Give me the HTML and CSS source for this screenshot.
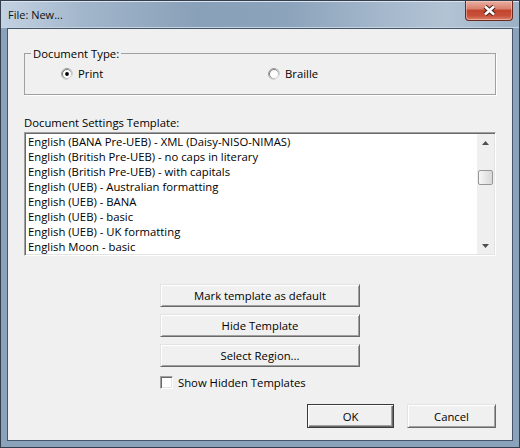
FILE: index.html
```html
<!DOCTYPE html>
<html>
<head>
<meta charset="utf-8">
<link rel="stylesheet" href="styles.css">
</head>
<body>
<div class="window">
  <div class="titlebar">
    <span class="title">File: New...</span>
    <div class="close">
      <svg width="13" height="11" viewBox="0 0 13 11">
        <path d="M2 1.5 L11 9.5 M11 1.5 L2 9.5" stroke="#4a1d16" stroke-width="4.6" fill="none"/>
        <path d="M2 1.5 L11 9.5 M11 1.5 L2 9.5" stroke="#ffffff" stroke-width="2.6" fill="none"/>
      </svg>
    </div>
  </div>
  <div class="frame">
    <div class="client">
      <fieldset class="group">
        <legend>Document Type:</legend>
        <div class="radios">
          <label class="radio print">
            <svg class="rb" width="12" height="12" viewBox="0 0 12 12">
              <defs>
                <linearGradient id="ro" x1="0" y1="0" x2="1" y2="1">
                  <stop offset="0" stop-color="#8a8a8a"/>
                  <stop offset="0.5" stop-color="#a8a8a8"/>
                  <stop offset="1" stop-color="#ffffff"/>
                </linearGradient>
                <linearGradient id="ri" x1="0" y1="0" x2="1" y2="1">
                  <stop offset="0" stop-color="#5a5a5a"/>
                  <stop offset="0.5" stop-color="#9a9a9a"/>
                  <stop offset="1" stop-color="#e3e3e3"/>
                </linearGradient>
              </defs>
              <circle cx="6" cy="6" r="5.5" fill="#fff" stroke="url(#ro)"/>
              <circle cx="6" cy="6" r="4.5" fill="#fff" stroke="url(#ri)"/>
              <circle cx="6" cy="6" r="1.9" fill="#000"/>
            </svg>
            <span>Print</span>
          </label>
          <label class="radio">
            <svg class="rb" width="12" height="12" viewBox="0 0 12 12">
              <circle cx="6" cy="6" r="5.5" fill="#fff" stroke="url(#ro)"/>
              <circle cx="6" cy="6" r="4.5" fill="#fff" stroke="url(#ri)"/>
            </svg>
            <span>Braille</span>
          </label>
        </div>
      </fieldset>

      <div class="list-label">Document Settings Template:</div>
      <div class="listbox">
        <ul class="items">
          <li>English (BANA Pre-UEB) - XML (Daisy-NISO-NIMAS)</li>
          <li>English (British Pre-UEB) - no caps in literary</li>
          <li>English (British Pre-UEB) - with capitals</li>
          <li>English (UEB) - Australian formatting</li>
          <li>English (UEB) - BANA</li>
          <li>English (UEB) - basic</li>
          <li>English (UEB) - UK formatting</li>
          <li>English Moon - basic</li>
        </ul>
        <div class="scrollbar">
          <div class="sb-btn">
            <svg width="7" height="4" viewBox="0 0 7 4"><polygon points="0,4 3.5,0 7,4" fill="#4f4f4f"/></svg>
          </div>
          <div class="sb-track"><div class="thumb"></div></div>
          <div class="sb-btn">
            <svg width="7" height="4" viewBox="0 0 7 4"><polygon points="0,0 3.5,4 7,0" fill="#4f4f4f"/></svg>
          </div>
        </div>
      </div>

      <div class="actions">
        <button class="btn wide">Mark template as default</button>
        <button class="btn wide">Hide Template</button>
        <button class="btn wide">Select Region...</button>
        <label class="check"><span class="cb"></span><span>Show Hidden Templates</span></label>
      </div>

      <div class="footer">
        <button class="btn ok">OK</button>
        <button class="btn cancel">Cancel</button>
      </div>
    </div>
  </div>
</div>
</body>
</html>
```
FILE: styles.css
```css
* { box-sizing: border-box; }
html, body { margin: 0; padding: 0; }
body {
  font-family: "Open Sans", "Liberation Sans", Arial, sans-serif;
  font-size: 11.3px;
  color: #000;
  background: #ffffff;
}
.window {
  width: 520px;
  height: 448px;
  border: 1px solid #333f4d;
  background: #8ba2bb;
  display: flex;
  flex-direction: column;
}
.titlebar {
  height: 27px;
  flex: none;
  display: flex;
  justify-content: space-between;
  align-items: flex-start;
  border-top: 1px solid #dbe4ee;
  border-bottom: 1px solid #c6d3e0;
  padding: 0 6px 0 7px;
  background: linear-gradient(to right, #c3d2e2 0%, #a2b6cb 16%, #88a0b8 38%, #8ba3bb 55%, #a5b8cc 74%, #b2c3d4 86%, #9db1c6 100%);
}
.title {
  font-size: 11px;
  line-height: 14px;
  margin-top: 6px;
  color: #111;
}
.close {
  width: 48px;
  height: 20px;
  margin-top: -1px;
  border: 1px solid #6b2a20;
  border-top: none;
  border-radius: 0 0 4px 4px;
  background: linear-gradient(#eab0a2 0%, #d9826f 40%, #c2452e 50%, #c8503a 78%, #dd8469 100%);
  display: flex;
  align-items: center;
  justify-content: center;
  box-shadow: inset 0 0 0 1px rgba(255, 220, 210, 0.45);
}
.frame {
  flex: 1;
  display: flex;
  padding: 0 6px 6px;
}
.client {
  flex: 1;
  border: 1px solid #45566a;
  background: #f0f0f0;
  padding: 18px 16px 0;
  display: flex;
  flex-direction: column;
}
.group {
  margin: 0;
  padding: 0 0 14px 0;
  border: 1px solid #a0a0a0;
  box-shadow: 1px 1px 0 #ffffff;
  min-inline-size: 0;
}
.group legend {
  margin-left: 6px;
  padding: 0 2px;
  line-height: 13px;
}
.radios {
  display: flex;
  margin-top: 7px;
  padding-left: 36px;
}
.radio {
  display: flex;
  align-items: center;
  gap: 5px;
  height: 13px;
  line-height: 13px;
}
.radio.print { width: 207px; }
.rb { flex: none; }

.list-label {
  margin-top: 21px;
  line-height: 13px;
}
.listbox {
  margin-top: 3px;
  height: 124px;
  display: flex;
  background: #ffffff;
  border: 1px solid;
  border-color: #a0a0a0 #ffffff #ffffff #a0a0a0;
  box-shadow: inset 1px 1px 0 #696969, inset -1px -1px 0 #e3e3e3;
  padding: 1px;
}
.items {
  flex: 1;
  list-style: none;
  margin: 0;
  padding: 0 0 0 2px;
  overflow: hidden;
}
.items li {
  height: 15px;
  line-height: 15px;
  white-space: nowrap;
}
.scrollbar {
  width: 17px;
  flex: none;
  display: flex;
  flex-direction: column;
  background: #efefef;
}
.sb-btn {
  height: 17px;
  display: flex;
  align-items: center;
  justify-content: center;
}
.sb-track {
  flex: 1;
  padding-top: 19px;
  display: flex;
  justify-content: center;
}
.thumb {
  width: 15px;
  height: 15px;
  border: 1px solid #979797;
  border-radius: 2px;
  background: linear-gradient(to right, #f6f6f6, #d8d8d8);
}

.btn {
  font: inherit;
  color: #000;
  background: #f0f0f0;
  border: 1px solid;
  border-color: #e3e3e3 #696969 #696969 #e3e3e3;
  box-shadow: inset 1px 1px 0 #ffffff, inset -1px -1px 0 #a0a0a0;
  padding: 0;
  margin: 0;
  text-align: center;
}
.actions {
  margin-top: 28px;
  margin-left: 136px;
  width: 200px;
  display: flex;
  flex-direction: column;
  gap: 7px;
}
.btn.wide { height: 23px; }
.check {
  margin-top: 2px;
  display: flex;
  align-items: center;
  gap: 5px;
  height: 13px;
  line-height: 13px;
}
.cb {
  width: 13px;
  height: 13px;
  background: #ffffff;
  border: 1px solid;
  border-color: #a0a0a0 #ffffff #ffffff #a0a0a0;
  box-shadow: inset 1px 1px 0 #696969, inset -1px -1px 0 #e3e3e3;
}
.footer {
  margin-top: 15px;
  display: flex;
  justify-content: flex-end;
  gap: 13px;
}
.btn.ok {
  width: 87px;
  height: 24px;
  border-color: #3a3a3a;
  box-shadow: inset 1px 1px 0 #ffffff, inset -1px -1px 0 #696969, inset -2px -2px 0 #a0a0a0;
}
.btn.cancel {
  width: 89px;
  height: 24px;
}
```
